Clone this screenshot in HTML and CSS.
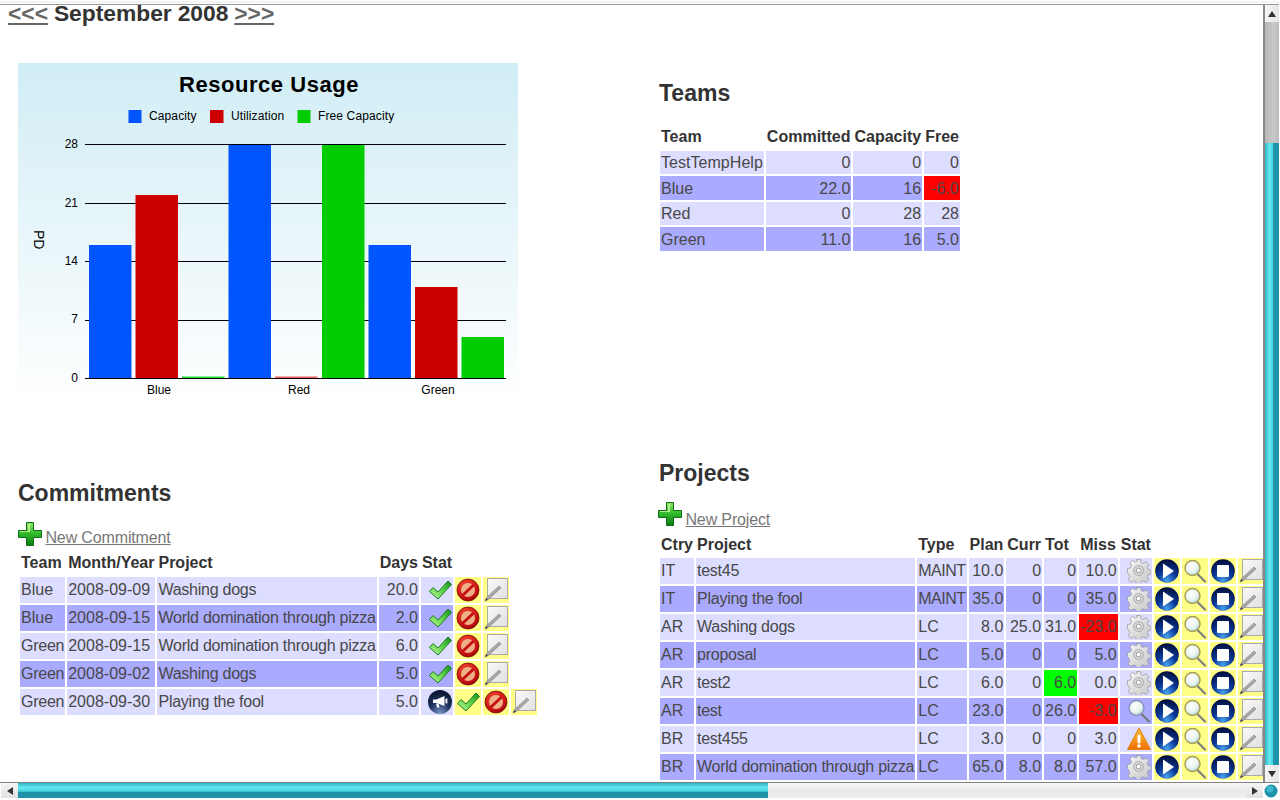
FILE: index.html
```html
<!DOCTYPE html>
<html lang="en">
<head>
<meta charset="utf-8">
<title>Resource planning</title>
<link rel="stylesheet" href="styles.css">
</head>
<body>
<svg class="defs" width="0" height="0" aria-hidden="true">
  <defs>
    <linearGradient id="gPlus" x1="0" y1="0" x2="0" y2="1"><stop offset="0" stop-color="#8fe860"/><stop offset=".5" stop-color="#2fb82a"/><stop offset="1" stop-color="#0c7c14"/></linearGradient>
    <linearGradient id="gCheck" x1="0" y1="1" x2="1" y2="0"><stop offset="0" stop-color="#c4f89c"/><stop offset=".55" stop-color="#58d044"/><stop offset="1" stop-color="#128a1c"/></linearGradient>
    <radialGradient id="gNo" cx=".4" cy=".3" r=".8"><stop offset="0" stop-color="#f24a32"/><stop offset=".7" stop-color="#c80f10"/><stop offset="1" stop-color="#7c0606"/></radialGradient>
    <radialGradient id="gBlue" cx=".5" cy=".9" r=".85"><stop offset="0" stop-color="#4aa0ee"/><stop offset=".45" stop-color="#0a3a9c"/><stop offset="1" stop-color="#021040"/></radialGradient>
    <radialGradient id="gMega" cx=".5" cy=".95" r=".9"><stop offset="0" stop-color="#7a94c4"/><stop offset=".5" stop-color="#1f3262"/><stop offset="1" stop-color="#0b1630"/></radialGradient>
    <linearGradient id="gGear" x1="0" y1="0" x2="1" y2="1"><stop offset="0" stop-color="#f8f8f8"/><stop offset="1" stop-color="#c4c4c4"/></linearGradient>
    <linearGradient id="gPage" x1="0" y1="0" x2="1" y2="1"><stop offset="0" stop-color="#fafafa"/><stop offset="1" stop-color="#e0e0e0"/></linearGradient>
    <radialGradient id="gLens" cx=".4" cy=".35" r=".7"><stop offset="0" stop-color="#ffffff"/><stop offset=".6" stop-color="#e8f4ec"/><stop offset="1" stop-color="#a8ccd8"/></radialGradient>
    <linearGradient id="gWarn" x1="0" y1="0" x2="0" y2="1"><stop offset="0" stop-color="#ffc43c"/><stop offset="1" stop-color="#f07000"/></linearGradient>
    <linearGradient id="gChart" x1="0" y1="0" x2="0" y2="1"><stop offset="0" stop-color="#d1edf5"/><stop offset="1" stop-color="#ffffff"/></linearGradient>
    <symbol id="i-plus" viewBox="0 0 24 24"><path d="M8.500 .5h7v8h8v7h-8v8h-7v-8h-8v-7h8z" fill="url(#gPlus)" stroke="#0f6a18"/><path d="M10 2h2v8H2v-1h8z" fill="#c8f8a0" opacity=".8"/></symbol>
    <symbol id="i-check" viewBox="0 0 24 24"><path d="M1.500 13.500L5 9.500 10 14 20 3l3.500 3.500L10 21z" fill="url(#gCheck)" stroke="#1c7c22" stroke-width="1" stroke-linejoin="round"/></symbol>
    <symbol id="i-no" viewBox="0 0 24 24"><circle cx="12" cy="12" r="11" fill="url(#gNo)" stroke="#7c1008" stroke-width=".8"/><circle cx="12" cy="12" r="7" fill="#eeb088"/><path d="M5.500 16.500L16.500 6l2 2L7.500 18.500z" fill="#c80f10"/></symbol>
    <symbol id="i-page" viewBox="0 0 24 24"><rect x="3.500" y=".5" width="20" height="20" fill="url(#gPage)" stroke="#aaa"/><path d="M1 23l1.500-3.500L15 8l2 2L4.500 21.500z" fill="#a8a8a8" stroke="#777" stroke-width=".5"/><path d="M1 23l1.200-3 1.800 1.800z" fill="#444"/></symbol>
    <symbol id="i-mega" viewBox="0 0 24 24"><circle cx="12" cy="12" r="12" fill="url(#gMega)"/><path d="M5 9.500h3.500L16.500 6v10l-8-3H5z" fill="#fff"/><path d="M8 13.500h2.500l1 4H9z" fill="#fff"/><path d="M17.500 9l1.800-.8v5.600l-1.800-.8z" fill="#fff"/></symbol>
    <symbol id="i-gear" viewBox="0 0 24 24"><path d="M10 .5h4l.7 3.200 2.300 1 2.900-1.700 2.800 2.800-1.700 2.900 1 2.300 3.200.7v4l-3.200.7-1 2.300 1.700 2.900-2.800 2.800-2.900-1.700-2.300 1-.7 3.200h-4l-.7-3.200-2.300-1-2.900 1.700-2.800-2.800 1.700-2.900-1-2.300L.5 14v-4l3.200-.7 1-2.300L3 4.100l2.800-2.800 2.900 1.700 2.300-1z" transform="scale(.96)" fill="url(#gGear)" stroke="#999" stroke-width=".8"/><circle cx="11.600" cy="11.500" r="5" fill="#d8d8d8" stroke="#aaa"/><circle cx="11.600" cy="11.500" r="2.400" fill="#fafafa" stroke="#999"/></symbol>
    <symbol id="i-play" viewBox="0 0 24 24"><circle cx="12" cy="12" r="11.800" fill="url(#gBlue)"/><path d="M8 4.500L19 12 8 19.500z" fill="#fff"/></symbol>
    <symbol id="i-stop" viewBox="0 0 24 24"><circle cx="12" cy="12" r="11.800" fill="url(#gBlue)"/><rect x="6" y="6" width="12" height="12" rx="1" fill="#fff"/></symbol>
    <symbol id="i-lens" viewBox="0 0 24 24"><path d="M14.500 15l7.500 7.500" stroke="#808080" stroke-width="2.200" stroke-linecap="round"/><circle cx="9.500" cy="9" r="7.500" fill="url(#gLens)" stroke="#a89c50" stroke-width="1.400"/></symbol>
    <symbol id="i-lensblue" viewBox="0 0 24 24"><path d="M14.500 15l7.500 7.500" stroke="#777" stroke-width="2.200" stroke-linecap="round"/><circle cx="9.500" cy="9" r="7.500" fill="url(#gLens)" stroke="#8890c0" stroke-width="1.400"/></symbol>
    <symbol id="i-warn" viewBox="0 0 24 24"><path d="M12 1L23.500 22.500H.5z" fill="url(#gWarn)" stroke="#e08010" stroke-linejoin="round"/><rect x="10.500" y="8" width="3" height="8.500" rx="1" fill="#fff"/><circle cx="12" cy="19" r="1.700" fill="#fff"/></symbol>
    <symbol id="i-ball" viewBox="0 0 16 16"><circle cx="8" cy="8" r="6.500" fill="#1c93a8"/><circle cx="7" cy="6" r="3.500" fill="#45c4d2" opacity=".8"/></symbol>
  </defs>
</svg>

<div class="topstrip"></div>
<div class="window">
  <main class="viewport">
    <h1 class="month"><a href="#">&lt;&lt;&lt;</a> September 2008 <a href="#">&gt;&gt;&gt;</a></h1>
    <div class="columns">
      <section class="left">
        <svg class="chart" width="500" height="340" viewBox="18 63 500 340">
          <rect x="18" y="63" width="500" height="340" fill="url(#gChart)"/>
          <text x="269" y="92" class="c-title" text-anchor="middle">Resource Usage</text>
          <rect x="128.500" y="110" width="13" height="13" fill="#0055ff"/>
          <text x="149" y="120" class="c-text c-legend">Capacity</text>
          <rect x="210" y="110" width="13.500" height="13" fill="#cc0000"/>
          <text x="231" y="120" class="c-text c-legend">Utilization</text>
          <rect x="297.500" y="110" width="13" height="13" fill="#00cc00"/>
          <text x="318" y="120" class="c-text c-legend">Free Capacity</text>
          <g class="c-axis">
            <text x="78" y="148" text-anchor="end">28</text>
            <text x="78" y="207" text-anchor="end">21</text>
            <text x="78" y="265" text-anchor="end">14</text>
            <text x="78" y="323" text-anchor="end">7</text>
            <text x="78" y="382" text-anchor="end">0</text>
          </g>
          <path stroke="#000" stroke-width="1" d="M85 144.500H506M85 203.500H506M85 261.500H506M85 320.500H506M85 378.500H506"/>
          <text class="c-ylabel" transform="translate(34 230) rotate(90)">PD</text>
          <g fill="#0055ff">
            <rect x="89" y="245" width="42.500" height="133"/>
            <rect x="228.500" y="145" width="42.500" height="233"/>
            <rect x="368.500" y="245" width="42.500" height="133"/>
          </g>
          <g fill="#cc0000">
            <rect x="135.500" y="195" width="42.500" height="183"/>
            <rect x="415" y="287" width="42.500" height="91"/>
          </g>
          <rect x="275" y="376.500" width="42.500" height="1.500" fill="#f06060"/>
          <g fill="#00cc00">
            <rect x="182" y="376.500" width="42.500" height="1.500" fill="#22dd33"/>
            <rect x="322" y="145" width="42.500" height="233"/>
            <rect x="461.500" y="337" width="42.500" height="41"/>
          </g>
          <g class="c-text" text-anchor="middle">
            <text x="159" y="394">Blue</text>
            <text x="299" y="394">Red</text>
            <text x="438" y="394">Green</text>
          </g>
        </svg>

        <h2 class="title title-commit">Commitments</h2>
        <p class="newlink"><svg class="ico"><use href="#i-plus"/></svg> <a href="#">New Commitment</a></p>
        <table class="grid commit">
          <thead><tr><th>Team</th><th>Month/Year</th><th>Project</th><th>Days</th><th>Stat</th></tr></thead>
          <tbody>
            <tr class="a tall"><td>Blue</td><td>2008-09-09</td><td class="p">Washing dogs</td><td class="n">20.0</td><td class="stat"><svg class="ico"><use href="#i-check"/></svg></td><td class="act"><svg class="ico"><use href="#i-no"/></svg></td><td class="act"><svg class="ico"><use href="#i-page"/></svg></td></tr>
            <tr class="b tall"><td>Blue</td><td>2008-09-15</td><td class="p">World domination through pizza</td><td class="n">2.0</td><td class="stat"><svg class="ico"><use href="#i-check"/></svg></td><td class="act"><svg class="ico"><use href="#i-no"/></svg></td><td class="act"><svg class="ico"><use href="#i-page"/></svg></td></tr>
            <tr class="a tall"><td class="g">Green</td><td>2008-09-15</td><td class="p">World domination through pizza</td><td class="n">6.0</td><td class="stat"><svg class="ico"><use href="#i-check"/></svg></td><td class="act"><svg class="ico"><use href="#i-no"/></svg></td><td class="act"><svg class="ico"><use href="#i-page"/></svg></td></tr>
            <tr class="b tall"><td class="g">Green</td><td>2008-09-02</td><td class="p">Washing dogs</td><td class="n">5.0</td><td class="stat"><svg class="ico"><use href="#i-check"/></svg></td><td class="act"><svg class="ico"><use href="#i-no"/></svg></td><td class="act"><svg class="ico"><use href="#i-page"/></svg></td></tr>
            <tr class="a tall"><td class="g">Green</td><td>2008-09-30</td><td class="p">Playing the fool</td><td class="n">5.0</td><td class="stat"><svg class="ico"><use href="#i-mega"/></svg></td><td class="act"><svg class="ico"><use href="#i-check"/></svg></td><td class="act"><svg class="ico"><use href="#i-no"/></svg></td><td class="act"><svg class="ico"><use href="#i-page"/></svg></td></tr>
          </tbody>
        </table>
      </section>

      <section class="right">
        <h2 class="title title-teams">Teams</h2>
        <table class="grid teams">
          <thead><tr><th>Team</th><th>Committed</th><th>Capacity</th><th>Free</th></tr></thead>
          <tbody>
            <tr class="a"><td class="wide">TestTempHelp</td><td class="n">0</td><td class="n">0</td><td class="n">0</td></tr>
            <tr class="b"><td>Blue</td><td class="n">22.0</td><td class="n">16</td><td class="n red">-6.0</td></tr>
            <tr class="a"><td>Red</td><td class="n">0</td><td class="n">28</td><td class="n">28</td></tr>
            <tr class="b"><td>Green</td><td class="n">11.0</td><td class="n">16</td><td class="n">5.0</td></tr>
          </tbody>
        </table>

        <h2 class="title title-projects">Projects</h2>
        <p class="newlink newlink-project"><svg class="ico"><use href="#i-plus"/></svg> <a href="#">New Project</a></p>
        <table class="grid">
          <thead><tr><th>Ctry</th><th>Project</th><th>Type</th><th>Plan</th><th>Curr</th><th>Tot</th><th>Miss</th><th>Stat</th></tr></thead>
          <tbody>
            <tr class="a tall"><td>IT</td><td class="p">test45</td><td class="m">MAINT</td><td class="n">10.0</td><td class="n">0</td><td class="n">0</td><td class="n">10.0</td><td class="stat"><svg class="ico"><use href="#i-gear"/></svg></td><td class="act"><svg class="ico"><use href="#i-play"/></svg></td><td class="act"><svg class="ico"><use href="#i-lens"/></svg></td><td class="act"><svg class="ico"><use href="#i-stop"/></svg></td><td class="act"><svg class="ico"><use href="#i-page"/></svg></td></tr>
            <tr class="b tall"><td>IT</td><td class="p">Playing the fool</td><td class="m">MAINT</td><td class="n">35.0</td><td class="n">0</td><td class="n">0</td><td class="n">35.0</td><td class="stat"><svg class="ico"><use href="#i-gear"/></svg></td><td class="act"><svg class="ico"><use href="#i-play"/></svg></td><td class="act"><svg class="ico"><use href="#i-lens"/></svg></td><td class="act"><svg class="ico"><use href="#i-stop"/></svg></td><td class="act"><svg class="ico"><use href="#i-page"/></svg></td></tr>
            <tr class="a tall"><td>AR</td><td class="p">Washing dogs</td><td>LC</td><td class="n">8.0</td><td class="n">25.0</td><td class="n">31.0</td><td class="n red">-23.0</td><td class="stat"><svg class="ico"><use href="#i-gear"/></svg></td><td class="act"><svg class="ico"><use href="#i-play"/></svg></td><td class="act"><svg class="ico"><use href="#i-lens"/></svg></td><td class="act"><svg class="ico"><use href="#i-stop"/></svg></td><td class="act"><svg class="ico"><use href="#i-page"/></svg></td></tr>
            <tr class="b tall"><td>AR</td><td class="p">proposal</td><td>LC</td><td class="n">5.0</td><td class="n">0</td><td class="n">0</td><td class="n">5.0</td><td class="stat"><svg class="ico"><use href="#i-gear"/></svg></td><td class="act"><svg class="ico"><use href="#i-play"/></svg></td><td class="act"><svg class="ico"><use href="#i-lens"/></svg></td><td class="act"><svg class="ico"><use href="#i-stop"/></svg></td><td class="act"><svg class="ico"><use href="#i-page"/></svg></td></tr>
            <tr class="a tall"><td>AR</td><td class="p">test2</td><td>LC</td><td class="n">6.0</td><td class="n">0</td><td class="n lime">6.0</td><td class="n">0.0</td><td class="stat"><svg class="ico"><use href="#i-gear"/></svg></td><td class="act"><svg class="ico"><use href="#i-play"/></svg></td><td class="act"><svg class="ico"><use href="#i-lens"/></svg></td><td class="act"><svg class="ico"><use href="#i-stop"/></svg></td><td class="act"><svg class="ico"><use href="#i-page"/></svg></td></tr>
            <tr class="b tall"><td>AR</td><td class="p">test</td><td>LC</td><td class="n">23.0</td><td class="n">0</td><td class="n">26.0</td><td class="n red">-3.0</td><td class="stat"><svg class="ico"><use href="#i-lensblue"/></svg></td><td class="act"><svg class="ico"><use href="#i-play"/></svg></td><td class="act"><svg class="ico"><use href="#i-lens"/></svg></td><td class="act"><svg class="ico"><use href="#i-stop"/></svg></td><td class="act"><svg class="ico"><use href="#i-page"/></svg></td></tr>
            <tr class="a tall"><td>BR</td><td class="p">test455</td><td>LC</td><td class="n">3.0</td><td class="n">0</td><td class="n">0</td><td class="n">3.0</td><td class="stat"><svg class="ico"><use href="#i-warn"/></svg></td><td class="act"><svg class="ico"><use href="#i-play"/></svg></td><td class="act"><svg class="ico"><use href="#i-lens"/></svg></td><td class="act"><svg class="ico"><use href="#i-stop"/></svg></td><td class="act"><svg class="ico"><use href="#i-page"/></svg></td></tr>
            <tr class="b tall"><td>BR</td><td class="p">World domination through pizza</td><td>LC</td><td class="n">65.0</td><td class="n">8.0</td><td class="n">8.0</td><td class="n">57.0</td><td class="stat"><svg class="ico"><use href="#i-gear"/></svg></td><td class="act"><svg class="ico"><use href="#i-play"/></svg></td><td class="act"><svg class="ico"><use href="#i-lens"/></svg></td><td class="act"><svg class="ico"><use href="#i-stop"/></svg></td><td class="act"><svg class="ico"><use href="#i-page"/></svg></td></tr>
          </tbody>
        </table>
      </section>
    </div>
  </main>
  <div class="vbar">
    <div class="sbtn"><span class="tri tri-up"></span></div>
    <div class="vtrack"></div>
    <div class="vthumb"></div>
    <div class="sbtn"><span class="tri tri-down"></span></div>
  </div>
</div>
<div class="hbar">
  <div class="sbtn hbtn"><span class="tri tri-left"></span></div>
  <div class="hthumb"></div>
  <div class="htrack"></div>
  <div class="sbtn hbtn"><span class="tri tri-right"></span></div>
  <svg class="ball" width="16" height="16"><use href="#i-ball"/></svg>
</div>
</body>
</html>
```
FILE: styles.css
```css
* { box-sizing: border-box; }
html, body { margin: 0; height: 100%; overflow: hidden; background: #fff; }
body {
  display: flex;
  flex-direction: column;
  width: 1280px;
  height: 800px;
  font-family: "Liberation Sans", Arial, sans-serif;
  font-size: 16px;
  color: #333;
}
.defs { position: absolute; }
.topstrip {
  flex: none;
  height: 5px;
  border-bottom: 1px solid #999;
  background: linear-gradient(#fff, #fff 1px, #e8e8e8 2px, #fff 3px);
  margin-right: 1px;
}
.window { flex: none; display: flex; height: 777px; }
.viewport { flex: none; width: 1263px; height: 777px; overflow: hidden; padding-left: 8px; }
.month { margin: 0; font-size: 22.800px; line-height: 16px; font-weight: bold; white-space: nowrap; word-spacing: -.4px; }
.month a { color: #666; text-decoration: underline; }
.columns { display: flex; align-items: flex-start; }
.left { flex: none; width: 650px; padding-left: 10px; padding-top: 42px; }
.right { flex: none; width: 700px; padding-top: 59px; }
.chart { display: block; }
.title { margin: 0; font-size: 23px; line-height: 26px; font-weight: bold; }
.title-commit { margin-top: 77px; }
.title-teams { padding-left: 1px; }
.title-projects { margin-top: 207px; padding-left: 1px; }
.newlink { margin: 16px 0 0; line-height: 24px; height: 27px; color: #777; white-space: nowrap; }
.newlink a { color: #777; text-decoration: underline; letter-spacing: -.14px; }
.newlink .ico { vertical-align: -3px; margin-right: -1px; }
.newlink-project { height: 29px; }
.newlink-project .ico { vertical-align: -1px; }
.ico { width: 24px; height: 24px; display: inline-block; }
.grid { border-collapse: separate; border-spacing: 2px; font-size: 16px; white-space: nowrap; }
.teams { margin-top: 17px; }
.grid th { padding: 1px; font-weight: bold; text-align: left; line-height: 21px; height: 23px; }
.commit th, .teams th { height: 24px; padding: 0 1px 2px; }
.grid td { padding: 0 1px; line-height: 23px; height: 23px; color: #484848; }
.grid tr.b td { height: 24px; }
.grid tr.tall td { height: 26px; padding: 1px; line-height: 24px; }
.grid tr.a td { background: #ddf; }
.grid tr.b td { background: #aaf; }
.grid .n { text-align: right; }
.grid td.p { letter-spacing: -.25px; }
.grid td.m { letter-spacing: -.5px; }
.grid td.g { letter-spacing: -.25px; }
.grid td.wide { letter-spacing: .04px; }
.grid tr td.red { background: #f00; }
.grid tr td.lime { background: #0f0; }
.grid tr td.act { background: #ff8; }
.grid td .ico { display: block; margin: 0 auto; }
.grid td.stat .ico { margin: 0 0 0 auto; }
.vbar { flex: none; width: 16px; display: flex; flex-direction: column; border-left: 2px solid #888; background: #c0c0c0; }
.sbtn { flex: none; height: 17px; background: linear-gradient(90deg, #f6f6f6, #e4e4e4); display: flex; align-items: center; justify-content: center; }
.vtrack { flex: none; height: 121px; background: linear-gradient(90deg, #b8b8b8, #c8c8c8 60%, #bcbcbc); }
.vthumb { flex: 1; background: linear-gradient(90deg, #2fb4c6 0, #66e8f0 30%, #45d2e0 55%, #1e92a8 62%, #1e92a8 100%); }
.tri { display: block; width: 0; height: 0; }
.tri-up { border: 4px solid transparent; border-top: 0; border-bottom: 6px solid #333; }
.tri-down { border: 4px solid transparent; border-bottom: 0; border-top: 6px solid #333; }
.tri-left { border: 4px solid transparent; border-left: 0; border-right: 6px solid #333; }
.tri-right { border: 4px solid transparent; border-right: 0; border-left: 6px solid #333; }
.hbar { flex: none; height: 16px; display: flex; border-top: 1px solid #808080; padding-left: 1px; width: 1279px; }
.hbtn { width: 17px; height: 15px; background: linear-gradient(#f6f6f6, #e0e0e0); }
.hthumb { flex: none; width: 750px; background: linear-gradient(#2fb4c6 0, #66e8f0 30%, #45d2e0 55%, #1e92a8 62%, #1e92a8 100%); }
.htrack { flex: 1; background: linear-gradient(#f8f8f8, #e8e8e8 50%, #f0f0f0); }
.ball { flex: none; }
.c-title { font: bold 22px "Liberation Sans", Arial, sans-serif; letter-spacing: .55px; fill: #000; }
.c-text, .c-axis text { font: 12px "Liberation Sans", Arial, sans-serif; fill: #000; }
.c-legend { letter-spacing: .12px; }
.c-ylabel { font: 14px "Liberation Sans", Arial, sans-serif; fill: #000; }
```
